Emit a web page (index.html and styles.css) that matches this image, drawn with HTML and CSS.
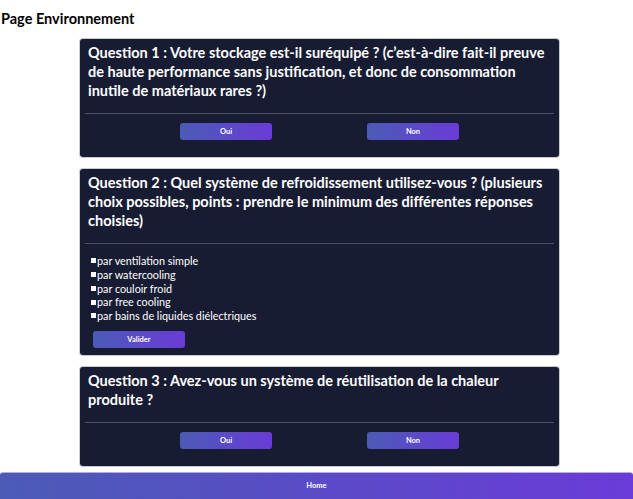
FILE: index.html
```html
<!DOCTYPE html>
<html lang="fr">
<head>
<meta charset="utf-8">
<title>Page Environnement</title>
<link rel="stylesheet" href="styles.css">
</head>
<body>
<div class="page">
  <h1 class="page-title">Page Environnement</h1>
  <main class="questions">
    <section class="card">
      <h2 class="q-title">Question 1 : Votre stockage est-il suréquipé ? (c’est-à-dire fait-il preuve de haute performance sans justification, et donc de consommation inutile de matériaux rares ?)</h2>
      <hr class="divider">
      <div class="answers">
        <button class="btn">Oui</button>
        <button class="btn">Non</button>
      </div>
    </section>
    <section class="card">
      <h2 class="q-title">Question 2 : Quel système de refroidissement utilisez-vous ? (plusieurs choix possibles, points : prendre le minimum des différentes réponses choisies)</h2>
      <hr class="divider">
      <ul class="choices">
        <li class="choice"><span class="box"></span>par ventilation simple</li>
        <li class="choice"><span class="box"></span>par watercooling</li>
        <li class="choice"><span class="box"></span>par couloir froid</li>
        <li class="choice"><span class="box"></span>par free cooling</li>
        <li class="choice"><span class="box"></span>par bains de liquides diélectriques</li>
      </ul>
      <div class="validate-row">
        <button class="btn">Valider</button>
      </div>
    </section>
    <section class="card">
      <h2 class="q-title">Question 3 : Avez-vous un système de réutilisation de la chaleur produite ?</h2>
      <hr class="divider">
      <div class="answers">
        <button class="btn">Oui</button>
        <button class="btn">Non</button>
      </div>
    </section>
  </main>
  <footer class="footer">
    <button class="home">Home</button>
  </footer>
</div>
</body>
</html>
```
FILE: styles.css
```css
* { box-sizing: border-box; }
html, body { margin: 0; padding: 0; background: #ffffff; }
body {
  font-family: Lato, "Open Sans", sans-serif;
  color: #000;
}
.page { display: flex; flex-direction: column; min-height: 499px; }
.page-title {
  margin: 0;
  padding: 10px 0 0 1px;
  font-size: 14.5px;
  line-height: 18px;
  font-weight: 700;
}
.questions {
  display: flex;
  flex-direction: column;
  gap: 12px;
  width: 479px;
  margin: 11px 0 0 80px;
}
.card {
  background: #181c33;
  border-radius: 3px;
  box-shadow: 0 0 0 1px #c9cad2;
  color: #ffffff;
  padding: 4px 5px 0;
}
.q-title {
  margin: 0;
  padding: 0 3px;
  font-size: 14.5px;
  line-height: 19px;
  font-weight: 700;
}
.divider {
  margin: 13px 0 0;
  border: 0;
  height: 1px;
  background: #4b4f63;
}
.answers {
  display: flex;
  justify-content: space-evenly;
  padding: 9px 0 17px;
}
.btn {
  width: 92px;
  height: 17px;
  border: 0;
  border-radius: 3px;
  background: linear-gradient(90deg, #4b5bb6, #6a3bd8);
  color: #fff;
  font-family: inherit;
  font-size: 7.5px;
  font-weight: 700;
  padding: 0;
}
.choices {
  list-style: none;
  margin: 0;
  padding: 10px 0 0 6px;
  font-size: 10.8px;
  line-height: 13.75px;
}
.choice { display: flex; align-items: center; }
.box {
  width: 5px;
  height: 5px;
  background: #fff;
  margin-right: 1px;
}
.validate-row { display: flex; padding: 8px 0 7px 8px; }
.footer { margin-top: 6px; }
.home {
  display: block;
  width: 100%;
  height: 27px;
  border: 0;
  border-top: 1px solid #b7a9e8;
  border-radius: 3px 3px 0 0;
  background: linear-gradient(90deg, #4b5bb6, #6a3bd8);
  color: #fff;
  font-family: inherit;
  font-size: 7.5px;
  font-weight: 700;
  padding: 0;
}
```
